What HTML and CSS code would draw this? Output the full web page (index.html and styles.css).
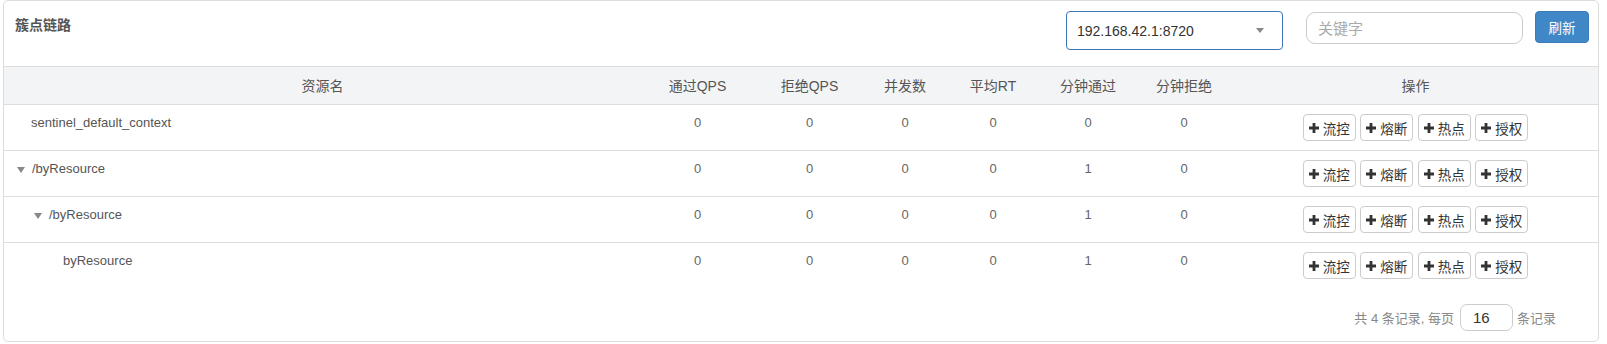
FILE: index.html
```html
<!DOCTYPE html>
<html lang="zh-CN">
<head>
<meta charset="utf-8">
<title>簇点链路</title>
<link rel="stylesheet" href="styles.css">
</head>
<body>
<div class="card">
  <div class="toolbar">
    <h2 class="title">簇点链路</h2>
    <div class="tools">
      <div class="select"><span>192.168.42.1:8720</span><span class="caret"></span></div>
      <input class="search" type="text" placeholder="关键字">
      <button class="btn-primary">刷新</button>
    </div>
  </div>
  <table class="grid">
    <colgroup>
      <col class="c-name"><col class="c-pass"><col class="c-block"><col class="c-conc"><col class="c-rt"><col class="c-mpass"><col class="c-mblock"><col>
    </colgroup>
    <thead>
      <tr><th>资源名</th><th>通过QPS</th><th>拒绝QPS</th><th>并发数</th><th>平均RT</th><th>分钟通过</th><th>分钟拒绝</th><th>操作</th></tr>
    </thead>
    <tbody>
      <tr>
        <td class="name"><div class="node lvl0">sentinel_default_context</div></td>
        <td>0</td><td>0</td><td>0</td><td>0</td><td>0</td><td>0</td>
        <td><div class="ops"><button class="btn"><svg class="plus" viewBox="0 0 10 10"><path d="M3.6 0h2.8v3.6H10v2.8H6.4V10H3.6V6.4H0V3.6h3.6z"/></svg>流控</button><button class="btn"><svg class="plus" viewBox="0 0 10 10"><path d="M3.6 0h2.8v3.6H10v2.8H6.4V10H3.6V6.4H0V3.6h3.6z"/></svg>熔断</button><button class="btn"><svg class="plus" viewBox="0 0 10 10"><path d="M3.6 0h2.8v3.6H10v2.8H6.4V10H3.6V6.4H0V3.6h3.6z"/></svg>热点</button><button class="btn"><svg class="plus" viewBox="0 0 10 10"><path d="M3.6 0h2.8v3.6H10v2.8H6.4V10H3.6V6.4H0V3.6h3.6z"/></svg>授权</button></div></td>
      </tr>
      <tr>
        <td class="name"><div class="node lvl1"><span class="tri"></span>/byResource</div></td>
        <td>0</td><td>0</td><td>0</td><td>0</td><td>1</td><td>0</td>
        <td><div class="ops"><button class="btn"><svg class="plus" viewBox="0 0 10 10"><path d="M3.6 0h2.8v3.6H10v2.8H6.4V10H3.6V6.4H0V3.6h3.6z"/></svg>流控</button><button class="btn"><svg class="plus" viewBox="0 0 10 10"><path d="M3.6 0h2.8v3.6H10v2.8H6.4V10H3.6V6.4H0V3.6h3.6z"/></svg>熔断</button><button class="btn"><svg class="plus" viewBox="0 0 10 10"><path d="M3.6 0h2.8v3.6H10v2.8H6.4V10H3.6V6.4H0V3.6h3.6z"/></svg>热点</button><button class="btn"><svg class="plus" viewBox="0 0 10 10"><path d="M3.6 0h2.8v3.6H10v2.8H6.4V10H3.6V6.4H0V3.6h3.6z"/></svg>授权</button></div></td>
      </tr>
      <tr>
        <td class="name"><div class="node lvl2"><span class="tri"></span>/byResource</div></td>
        <td>0</td><td>0</td><td>0</td><td>0</td><td>1</td><td>0</td>
        <td><div class="ops"><button class="btn"><svg class="plus" viewBox="0 0 10 10"><path d="M3.6 0h2.8v3.6H10v2.8H6.4V10H3.6V6.4H0V3.6h3.6z"/></svg>流控</button><button class="btn"><svg class="plus" viewBox="0 0 10 10"><path d="M3.6 0h2.8v3.6H10v2.8H6.4V10H3.6V6.4H0V3.6h3.6z"/></svg>熔断</button><button class="btn"><svg class="plus" viewBox="0 0 10 10"><path d="M3.6 0h2.8v3.6H10v2.8H6.4V10H3.6V6.4H0V3.6h3.6z"/></svg>热点</button><button class="btn"><svg class="plus" viewBox="0 0 10 10"><path d="M3.6 0h2.8v3.6H10v2.8H6.4V10H3.6V6.4H0V3.6h3.6z"/></svg>授权</button></div></td>
      </tr>
      <tr>
        <td class="name"><div class="node lvl3">byResource</div></td>
        <td>0</td><td>0</td><td>0</td><td>0</td><td>1</td><td>0</td>
        <td><div class="ops"><button class="btn"><svg class="plus" viewBox="0 0 10 10"><path d="M3.6 0h2.8v3.6H10v2.8H6.4V10H3.6V6.4H0V3.6h3.6z"/></svg>流控</button><button class="btn"><svg class="plus" viewBox="0 0 10 10"><path d="M3.6 0h2.8v3.6H10v2.8H6.4V10H3.6V6.4H0V3.6h3.6z"/></svg>熔断</button><button class="btn"><svg class="plus" viewBox="0 0 10 10"><path d="M3.6 0h2.8v3.6H10v2.8H6.4V10H3.6V6.4H0V3.6h3.6z"/></svg>热点</button><button class="btn"><svg class="plus" viewBox="0 0 10 10"><path d="M3.6 0h2.8v3.6H10v2.8H6.4V10H3.6V6.4H0V3.6h3.6z"/></svg>授权</button></div></td>
      </tr>
    </tbody>
  </table>
  <div class="footer">
    <span>共 4 条记录, 每页</span>
    <input class="page-size" type="text" value="16">
    <span>条记录</span>
  </div>
</div>
</body>
</html>
```
FILE: styles.css
```css
* { box-sizing: border-box; }
html, body { margin: 0; padding: 0; background: #fff; }
body {
  font-family: "Liberation Sans", Arial, "Noto Sans CJK SC", sans-serif;
  color: #555;
  font-size: 13px;
}
.card {
  margin: 0 8px 0 3px;
  border: 1px solid #ddd;
  border-radius: 5px;
  background: #fff;
}
.toolbar {
  display: flex;
  justify-content: space-between;
  align-items: flex-start;
  height: 65px;
}
.title {
  margin: 14px 0 0 11px;
  font-size: 14px;
  line-height: 20px;
  font-weight: 700;
  color: #555;
}
.tools {
  display: flex;
  align-items: flex-start;
  padding: 10px 9px 0 0;
}
.select {
  width: 217px;
  height: 39px;
  border: 1px solid #3d76b6;
  border-radius: 4px;
  display: flex;
  align-items: center;
  justify-content: space-between;
  padding: 0 18px 0 10px;
  font-size: 14px;
  color: #333;
}
.caret {
  width: 0;
  height: 0;
  border-left: 4.5px solid transparent;
  border-right: 4.5px solid transparent;
  border-top: 5px solid #888;
  margin-top: -1px;
}
.search {
  margin: 1px 0 0 23px;
  width: 217px;
  height: 32px;
  border: 1px solid #ccc;
  border-radius: 9px;
  padding: 0 11px;
  font-family: inherit;
  font-size: 15px;
  color: #333;
  outline: none;
}
.search::placeholder { color: #aaa; }
.btn-primary {
  margin-left: 12px;
  width: 54px;
  height: 32px;
  background: #3f87c6;
  border: 1px solid #3a7cb8;
  border-radius: 4px;
  color: #fff;
  font-family: inherit;
  font-size: 13.5px;
  padding: 0;
}
.grid {
  width: 100%;
  table-layout: fixed;
  border-collapse: separate;
  border-spacing: 0;
}
.c-name { width: 637px; }
.c-pass { width: 113px; }
.c-block { width: 111px; }
.c-conc { width: 80px; }
.c-rt { width: 96px; }
.c-mpass { width: 94px; }
.c-mblock { width: 98px; }
.grid th {
  background: #f3f4f6;
  border-top: 1px solid #ddd;
  border-bottom: 1px solid #ddd;
  font-weight: 400;
  font-size: 14px;
  line-height: 20px;
  padding: 9px 0 8px;
  color: #555;
  text-align: center;
}
.grid td {
  padding: 9px 0;
  line-height: 18px;
  vertical-align: top;
  text-align: center;
  color: #666;
  font-size: 13px;
  border-top: 1px solid #ddd;
}
.grid tbody tr:first-child td { border-top: none; }
.grid td.name { text-align: left; color: #555; }
.node { display: flex; align-items: center; }
.lvl0 { padding-left: 27px; }
.lvl1 { padding-left: 13px; }
.lvl2 { padding-left: 30px; }
.lvl3 { padding-left: 59px; }
.tri {
  width: 0;
  height: 0;
  border-left: 4.5px solid transparent;
  border-right: 4.5px solid transparent;
  border-top: 6px solid #888;
  margin-right: 7px;
  margin-top: 1px;
}
.ops {
  display: flex;
  justify-content: center;
  gap: 4.5px;
}
.btn {
  display: inline-flex;
  align-items: center;
  height: 27px;
  padding: 0 5px;
  border: 1px solid #ccc;
  border-radius: 4px;
  background: #fff;
  color: #333;
  font-family: inherit;
  font-size: 13.5px;
  gap: 4px;
}
.plus { width: 10px; height: 10px; fill: #333; }
.footer {
  display: flex;
  justify-content: flex-end;
  align-items: center;
  padding: 16px 42px 10px 0;
  color: #888;
  font-size: 13px;
}
.page-size {
  margin: 0 4px 0 6px;
  width: 53px;
  height: 27px;
  border: 1px solid #ccc;
  border-radius: 7px;
  padding: 0 12px;
  font-family: inherit;
  font-size: 15px;
  color: #333;
  outline: none;
}
```
